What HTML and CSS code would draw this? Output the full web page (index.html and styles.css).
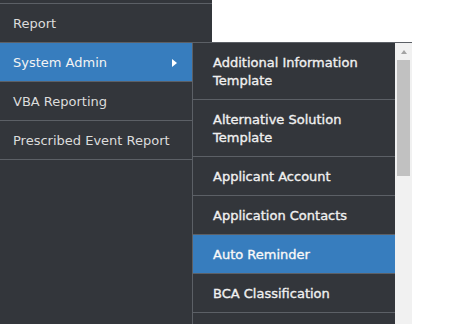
FILE: index.html
```
<!DOCTYPE html>
<html lang="en">
<head>
    <meta charset="UTF-8">
    <title>Menu</title>
    <link rel="stylesheet" href="styles.css">
</head>
<body>
<div class="sidebar">
    <ul class="menu">
        <li class="menu-item">Report</li>
        <li class="menu-item active">
            <span>System Admin</span>
            <span class="caret"></span>
        </li>
        <li class="menu-item">VBA Reporting</li>
        <li class="menu-item">Prescribed Event Report</li>
    </ul>

    <div class="submenu">
        <ul class="submenu-list">
            <li class="submenu-item">Additional Information Template</li>
            <li class="submenu-item">Alternative Solution Template</li>
            <li class="submenu-item">Applicant Account</li>
            <li class="submenu-item">Application Contacts</li>
            <li class="submenu-item active">Auto Reminder</li>
            <li class="submenu-item">BCA Classification</li>
        </ul>
        <div class="scrollbar">
            <div class="scroll-btn"><span class="scroll-up"></span></div>
            <div class="scroll-track">
                <div class="scroll-thumb"></div>
            </div>
        </div>
    </div>
</div>
</body>
</html>
```

FILE: styles.css
```
body, html {
    margin: 0;
    padding: 0;
    height: 100%;
    background-color: #ffffff;
    font-family: "DejaVu Sans", Verdana, sans-serif;
    font-size: 13px;
    overflow: hidden;
}
.sidebar {
    position: relative;
    width: 212px;
    height: 100vh;
    background-color: #33363b;
}
.menu {
    list-style: none;
    margin: 0;
    padding: 3px 0 0 0;
}
.menu-item {
    display: flex;
    align-items: center;
    justify-content: space-between;
    padding: 11px 35px 9px 13px;
    line-height: 18px;
    color: #dcdcdc;
    border-top: 1px solid #5c6066;
}
.menu-item:last-child {
    border-bottom: 1px solid #5c6066;
}
.menu-item.active {
    background-color: #377dbe;
    color: #f4f4f4;
}
.caret {
    width: 0;
    height: 0;
    border-left: 5px solid #ffffff;
    border-top: 4px solid transparent;
    border-bottom: 4px solid transparent;
}
.submenu {
    position: absolute;
    left: 192px;
    top: 42px;
    bottom: 0;
    width: 219px;
    display: flex;
    border-left: 1px solid #5c6066;
    border-top: 1px solid #5c6066;
    background-color: #33363b;
}
.submenu-list {
    flex: 1;
    list-style: none;
    margin: 0;
    padding: 0;
    overflow: hidden;
}
.submenu-item {
    padding: 11px 12px 9px 20px;
    line-height: 18px;
    color: #f0f0f0;
    -webkit-text-stroke: 0.35px #f0f0f0;
    border-bottom: 1px solid #5c6066;
}
.submenu-item.active {
    background-color: #377dbe;
    color: #ffffff;
}
.scrollbar {
    width: 17px;
    display: flex;
    flex-direction: column;
    background-color: #f1f1f1;
}
.scroll-btn {
    height: 17px;
    display: flex;
    justify-content: center;
    align-items: center;
}
.scroll-up {
    width: 0;
    height: 0;
    border-bottom: 4px solid #a3a3a3;
    border-left: 3.5px solid transparent;
    border-right: 3.5px solid transparent;
}
.scroll-track {
    flex: 1;
    padding: 0 2px;
}
.scroll-thumb {
    height: 116px;
    background-color: #c1c1c1;
}
```
